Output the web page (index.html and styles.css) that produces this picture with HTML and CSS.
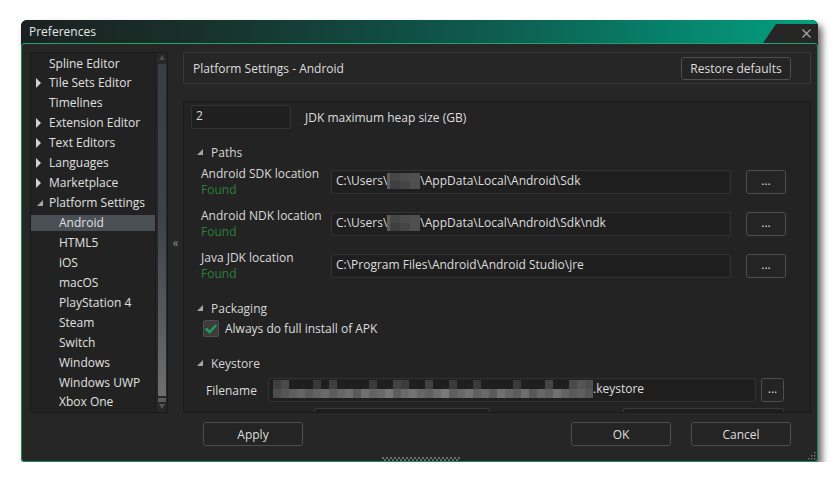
FILE: index.html
```html
<!DOCTYPE html>
<html lang="en">
<head>
<meta charset="utf-8">
<title>Preferences</title>
<link rel="stylesheet" href="styles.css">
</head>
<body>
<div class="page">
  <div class="window">
    <div class="titlebar">
      <span class="title">Preferences</span>
      <div class="closetab">
        <svg class="close-x" width="9" height="9" viewBox="0 0 9 9"><path d="M0.5 0.5 L8.5 8.5 M8.5 0.5 L0.5 8.5" stroke="#a6a6a6" stroke-width="1.2" fill="none"/></svg>
      </div>
    </div>
    <div class="body">
      <div class="main">
        <div class="tree">
          <ul class="tree-list">
            <li class="l1"><span class="twisty"></span>Spline Editor</li>
            <li class="l1"><span class="twisty"><span class="tri-r"></span></span>Tile Sets Editor</li>
            <li class="l1"><span class="twisty"></span>Timelines</li>
            <li class="l1"><span class="twisty"><span class="tri-r"></span></span>Extension Editor</li>
            <li class="l1"><span class="twisty"><span class="tri-r"></span></span>Text Editors</li>
            <li class="l1"><span class="twisty"><span class="tri-r"></span></span>Languages</li>
            <li class="l1"><span class="twisty"><span class="tri-r"></span></span>Marketplace</li>
            <li class="l1"><span class="twisty"><span class="tri-d"></span></span>Platform Settings</li>
            <li class="l2 sel">Android</li>
            <li class="l2">HTML5</li>
            <li class="l2">iOS</li>
            <li class="l2">macOS</li>
            <li class="l2">PlayStation 4</li>
            <li class="l2">Steam</li>
            <li class="l2">Switch</li>
            <li class="l2">Windows</li>
            <li class="l2">Windows UWP</li>
            <li class="l2">Xbox One</li>
          </ul>
          <div class="scrollbar">
            <span class="sb-up"></span>
            <span class="sb-thumb"></span>
            <span class="sb-seg"></span>
            <span class="sb-down"></span>
          </div>
        </div>
        <div class="splitter">«</div>
        <div class="right">
          <div class="header">
            <span>Platform Settings - Android</span>
            <button class="btn restore">Restore defaults</button>
          </div>
          <div class="content">
            <div class="heap-row">
              <div class="field heap">2</div>
              <span class="heap-label">JDK maximum heap size (GB)</span>
            </div>

            <div class="section-head paths"><span class="tri-d sec"></span>Paths</div>
            <div class="path-row first">
              <div class="lbl2"><div>Android SDK location</div><div class="found">Found</div></div>
              <div class="field path">C:\Users\<svg class="mosaic-user" width="33" height="16" viewBox="0 0 33 16"><rect x="0" y="0" width="3" height="16" fill="#5c5c5c"/><rect x="3" y="0" width="10" height="8" fill="#474747"/><rect x="13" y="0" width="10" height="8" fill="#4d4d4d"/><rect x="3" y="8" width="10" height="8" fill="#3f3f3f"/><rect x="13" y="8" width="10" height="8" fill="#454545"/><rect x="23" y="0" width="10" height="16" fill="#4f4f4f"/></svg>\AppData\Local\Android\Sdk</div>
              <button class="btn dots">...</button>
            </div>
            <div class="path-row">
              <div class="lbl2"><div>Android NDK location</div><div class="found">Found</div></div>
              <div class="field path">C:\Users\<svg class="mosaic-user" width="33" height="16" viewBox="0 0 33 16"><rect x="0" y="0" width="3" height="16" fill="#5c5c5c"/><rect x="3" y="0" width="10" height="8" fill="#474747"/><rect x="13" y="0" width="10" height="8" fill="#4d4d4d"/><rect x="3" y="8" width="10" height="8" fill="#3f3f3f"/><rect x="13" y="8" width="10" height="8" fill="#454545"/><rect x="23" y="0" width="10" height="16" fill="#4f4f4f"/></svg>\AppData\Local\Android\Sdk\ndk</div>
              <button class="btn dots">...</button>
            </div>
            <div class="path-row">
              <div class="lbl2"><div>Java JDK location</div><div class="found">Found</div></div>
              <div class="field path">C:\Program Files\Android\Android Studio\jre</div>
              <button class="btn dots">...</button>
            </div>

            <div class="section-head packaging"><span class="tri-d sec"></span>Packaging</div>
            <div class="check-row">
              <span class="checkbox"><svg width="14" height="14" viewBox="0 0 14 14"><path d="M2.5 7.2 L5.6 10.2 L11.5 3.8" stroke="#1fa35c" stroke-width="2.4" fill="none" stroke-linecap="round" stroke-linejoin="round"/></svg></span>
              <span>Always do full install of APK</span>
            </div>

            <div class="section-head keystore"><span class="tri-d sec"></span>Keystore</div>
            <div class="file-row">
              <span class="file-label">Filename</span>
              <div class="field file"><svg class="mosaic-file" width="320" height="18" viewBox="0 0 320 18">
                <g>
                  <rect x="0" y="0" width="8" height="9" fill="#3e3e3e"/><rect x="8" y="0" width="8" height="9" fill="#4a4a4a"/>
                  <rect x="40" y="0" width="8" height="9" fill="#393939"/><rect x="56" y="0" width="8" height="9" fill="#3f3f3f"/>
                  <rect x="96" y="0" width="8" height="9" fill="#3a3a3a"/><rect x="120" y="0" width="8" height="9" fill="#444"/>
                  <rect x="128" y="0" width="8" height="9" fill="#3c3c3c"/><rect x="152" y="0" width="8" height="9" fill="#404040"/>
                  <rect x="176" y="0" width="8" height="9" fill="#3b3b3b"/><rect x="200" y="0" width="8" height="9" fill="#3a3a3a"/>
                  <rect x="240" y="0" width="8" height="9" fill="#3a3a3a"/><rect x="272" y="0" width="8" height="9" fill="#454545"/>
                  <rect x="296" y="0" width="8" height="9" fill="#4a4a4a"/><rect x="304" y="0" width="8" height="9" fill="#555"/>
                  <rect x="312" y="0" width="8" height="9" fill="#4e4e4e"/>
                </g>
                <g>
                  <rect x="0" y="9" width="8" height="9" fill="#4d4d4d"/><rect x="8" y="9" width="8" height="9" fill="#555"/>
                  <rect x="16" y="9" width="8" height="9" fill="#5e5e5e"/><rect x="24" y="9" width="8" height="9" fill="#666"/>
                  <rect x="32" y="9" width="8" height="9" fill="#5a5a5a"/><rect x="40" y="9" width="8" height="9" fill="#626262"/>
                  <rect x="48" y="9" width="8" height="9" fill="#6a6a6a"/><rect x="56" y="9" width="8" height="9" fill="#5c5c5c"/>
                  <rect x="64" y="9" width="8" height="9" fill="#666"/><rect x="72" y="9" width="8" height="9" fill="#6e6e6e"/>
                  <rect x="80" y="9" width="8" height="9" fill="#5a5a5a"/><rect x="88" y="9" width="8" height="9" fill="#707070"/>
                  <rect x="96" y="9" width="8" height="9" fill="#636363"/><rect x="104" y="9" width="8" height="9" fill="#6a6a6a"/>
                  <rect x="112" y="9" width="8" height="9" fill="#777"/><rect x="120" y="9" width="8" height="9" fill="#5e5e5e"/>
                  <rect x="128" y="9" width="8" height="9" fill="#6b6b6b"/><rect x="136" y="9" width="8" height="9" fill="#737373"/>
                  <rect x="144" y="9" width="8" height="9" fill="#666"/><rect x="152" y="9" width="8" height="9" fill="#5f5f5f"/>
                  <rect x="160" y="9" width="8" height="9" fill="#6d6d6d"/><rect x="168" y="9" width="8" height="9" fill="#7a7a7a"/>
                  <rect x="176" y="9" width="8" height="9" fill="#5e5e5e"/><rect x="184" y="9" width="8" height="9" fill="#686868"/>
                  <rect x="192" y="9" width="8" height="9" fill="#727272"/><rect x="200" y="9" width="8" height="9" fill="#606060"/>
                  <rect x="208" y="9" width="8" height="9" fill="#6a6a6a"/><rect x="216" y="9" width="8" height="9" fill="#5b5b5b"/>
                  <rect x="224" y="9" width="8" height="9" fill="#707070"/><rect x="232" y="9" width="8" height="9" fill="#656565"/>
                  <rect x="240" y="9" width="8" height="9" fill="#5c5c5c"/><rect x="248" y="9" width="8" height="9" fill="#6e6e6e"/>
                  <rect x="256" y="9" width="8" height="9" fill="#585858"/><rect x="264" y="9" width="8" height="9" fill="#676767"/>
                  <rect x="272" y="9" width="8" height="9" fill="#5e5e5e"/><rect x="280" y="9" width="8" height="9" fill="#707070"/>
                  <rect x="288" y="9" width="8" height="9" fill="#626262"/><rect x="296" y="9" width="8" height="9" fill="#595959"/>
                  <rect x="304" y="9" width="8" height="9" fill="#5f5f5f"/><rect x="312" y="9" width="8" height="9" fill="#555"/>
                </g>
              </svg>.keystore</div>
              <button class="btn dots small">...</button>
            </div>
            <div class="next-row">
              <div class="field stub a"></div>
              <div class="field stub b"></div>
            </div>
          </div>
        </div>
      </div>
      <div class="footer">
        <button class="btn foot">Apply</button>
        <button class="btn foot ok">OK</button>
        <button class="btn foot">Cancel</button>
      </div>
      <div class="grip"></div>
    </div>
    <svg class="resize" width="8" height="8" viewBox="0 0 8 8"><g fill="#707070"><rect x="6" y="0" width="1.5" height="1.5"/><rect x="3" y="3" width="1.5" height="1.5"/><rect x="6" y="3" width="1.5" height="1.5"/><rect x="0" y="6" width="1.5" height="1.5"/><rect x="3" y="6" width="1.5" height="1.5"/><rect x="6" y="6" width="1.5" height="1.5"/></g></svg>
  </div>
</div>
</body>
</html>
```
FILE: styles.css
```css
* { box-sizing: border-box; }
html, body { margin: 0; padding: 0; background: #ffffff; }
body {
  font-family: "Open Sans", "Noto Sans", "DejaVu Sans", sans-serif;
  font-size: 12px;
  color: #dedede;
}
.page { padding: 20px 0 0 21px; }

.window {
  position: relative;
  width: 797px;
  height: 442px;
  display: flex;
  flex-direction: column;
  background: #1c2321;
  border-radius: 6px 6px 4px 4px;
  box-shadow: 4px 5px 7px rgba(0, 0, 0, 0.6);
}

.titlebar {
  height: 23px;
  flex: none;
  display: flex;
  overflow: hidden;
  border-radius: 6px 6px 0 0;
  background: linear-gradient(90deg, #1b2120 0%, #18302b 22%, #114a41 45%, #0d6555 65%, #087f69 80%, #03a07f 100%);
}
.title {
  padding-left: 8px;
  line-height: 23px;
  color: #e6e6e6;
}
.closetab {
  margin-left: auto;
  align-self: flex-end;
  width: 55px;
  height: 19px;
  background: #262626;
  clip-path: polygon(13px 0, 100% 0, 100% 100%, 0 100%);
  display: flex;
  justify-content: flex-end;
  align-items: flex-start;
  padding: 5px 7px 0 0;
}
.close-x { display: block; }

.body {
  flex: 1;
  display: flex;
  flex-direction: column;
  background: #262626;
  border: 1px solid #1d8a5c;
  border-top-color: #21a56d;
  border-radius: 4px;
  padding: 0 6px 0 8px;
}

.main {
  display: flex;
  height: 361px;
  margin-top: 8px;
}

/* tree */
.tree {
  width: 138px;
  display: flex;
  border: 1px solid #1a1a1a;
  background: #222222;
}
.tree-list {
  flex: 1;
  list-style: none;
  margin: 0;
  padding: 2.5px 0 0 0;
  display: flex;
  flex-direction: column;
  gap: 3.95px;
  overflow: hidden;
}
.tree-list li {
  height: 16px;
  line-height: 16px;
  display: flex;
  align-items: center;
  white-space: nowrap;
  color: #e0e0e0;
}
.tree-list .l1 { padding-left: 5px; }
.tree-list .l2 { padding-left: 28px; }
.tree-list .sel { background: #4a4f56; }
.twisty {
  width: 13px;
  height: 16px;
  display: flex;
  align-items: center;
}
.tri-r {
  width: 0;
  height: 0;
  border-left: 5px solid #d2d2d2;
  border-top: 5px solid transparent;
  border-bottom: 5px solid transparent;
}
.tri-d {
  width: 0;
  height: 0;
  margin-left: 1px;
  border-bottom: 6px solid #a6a6a6;
  border-left: 6px solid transparent;
}

.scrollbar {
  width: 12px;
  border-left: 1px solid #1a1a1a;
  background: #272727;
  display: flex;
  flex-direction: column;
  align-items: center;
}
.sb-up {
  margin-top: 2px;
  width: 0;
  height: 0;
  border-bottom: 5px solid #4d4d4d;
  border-left: 3.5px solid transparent;
  border-right: 3.5px solid transparent;
}
.sb-thumb {
  flex: 1;
  width: 8px;
  margin-top: 4px;
  background: linear-gradient(180deg, #393e44 0%, #3d4248 45%, #55585b 75%, #6e6e6e 100%);
}
.sb-seg {
  width: 8px;
  height: 4px;
  margin-top: 2px;
  background: #5a5a5a;
}
.sb-down {
  margin: 2px 0 3px;
  width: 0;
  height: 0;
  border-top: 5px solid #555555;
  border-left: 3.5px solid transparent;
  border-right: 3.5px solid transparent;
}

.splitter {
  width: 15px;
  display: flex;
  align-items: center;
  justify-content: center;
  padding-top: 19px;
  color: #8a8a8a;
}

/* right side */
.right {
  flex: 1;
  display: flex;
  flex-direction: column;
}
.header {
  height: 32px;
  flex: none;
  display: flex;
  align-items: center;
  justify-content: space-between;
  border: 1px solid #3a3a3a;
  border-radius: 2px;
  padding: 0 19px 0 9px;
}

.btn {
  font-family: inherit;
  font-size: 12px;
  color: #dedede;
  background: #242424;
  border: 1px solid #4e4e4e;
  border-radius: 3px;
  padding: 0;
  margin: 0;
  text-align: center;
}
.restore { width: 110px; height: 23px; }

.content {
  flex: 1;
  margin-top: 17px;
  border: 1px solid #1a1a1a;
  background: #232323;
  overflow: hidden;
  padding: 3px 0 0 0;
}

.field {
  background: #1f1f1f;
  border: 1px solid #333333;
  border-radius: 2px;
  height: 24px;
  line-height: 20px;
  padding: 0 0 2px 4px;
  white-space: nowrap;
  overflow: hidden;
  color: #dedede;
}

.heap-row {
  display: flex;
  align-items: center;
  height: 24px;
  padding-left: 7px;
}
.heap { width: 100px; }
.heap-label { margin-left: 14px; }

.section-head {
  display: flex;
  align-items: center;
  height: 20px;
  line-height: 20px;
  padding-left: 12px;
  color: #d6d6d6;
}
.tri-d.sec { margin-right: 8px; margin-bottom: 2px; }
.paths { margin-top: 13.5px; }
.packaging { margin-top: 16.5px; }
.keystore { margin-top: 17px; }

.path-row {
  display: flex;
  align-items: center;
  padding-left: 17px;
  margin-top: 10px;
}
.path-row.first { margin-top: 3.5px; }
.lbl2 {
  width: 130px;
  line-height: 16px;
  color: #dadada;
}
.found { color: #2a8038; }
.path { width: 400px; padding-left: 4px; }
.mosaic-user { vertical-align: -4px; }
.dots { width: 40px; height: 24px; margin-left: 15px; line-height: 20px; padding-bottom: 2px; }
.dots.small { width: 23px; margin-left: 5px; }

.check-row {
  display: flex;
  align-items: center;
  margin-top: 1.5px;
  padding-left: 19px;
  height: 17px;
}
.checkbox {
  width: 16px;
  height: 17px;
  margin-right: 6px;
  background: #3c3c3c;
  border: 1px solid #4f4f4f;
  border-radius: 2px;
  display: flex;
  align-items: center;
  justify-content: center;
}

.file-row {
  display: flex;
  align-items: center;
  margin-top: 4px;
  padding-left: 22px;
}
.file-label { width: 62px; }
.file { width: 488px; padding-left: 4px; }
.mosaic-file { vertical-align: -5px; }

.next-row {
  display: flex;
  margin-top: 6px;
  padding-left: 130px;
}
.stub { height: 20px; background: #1e1e1e; border-color: #3a3a3a; }
.stub.a { width: 176px; }
.stub.b { width: 161px; margin-left: 133px; }

.footer {
  display: flex;
  margin-top: 9px;
  height: 24px;
  padding: 0 20px 0 173px;
}
.foot { width: 100px; height: 24px; }
.ok { margin-left: auto; margin-right: 20px; }

.grip {
  align-self: center;
  width: 78px;
  height: 4px;
  margin-top: 11px;
  background:
    linear-gradient(90deg, #6a6a6a 50%, transparent 50%) 0 0 / 4px 2px repeat-x,
    linear-gradient(90deg, transparent 50%, #6a6a6a 50%) 0 2px / 4px 2px repeat-x;
}

.resize {
  position: absolute;
  right: 2px;
  bottom: 2px;
}
```
